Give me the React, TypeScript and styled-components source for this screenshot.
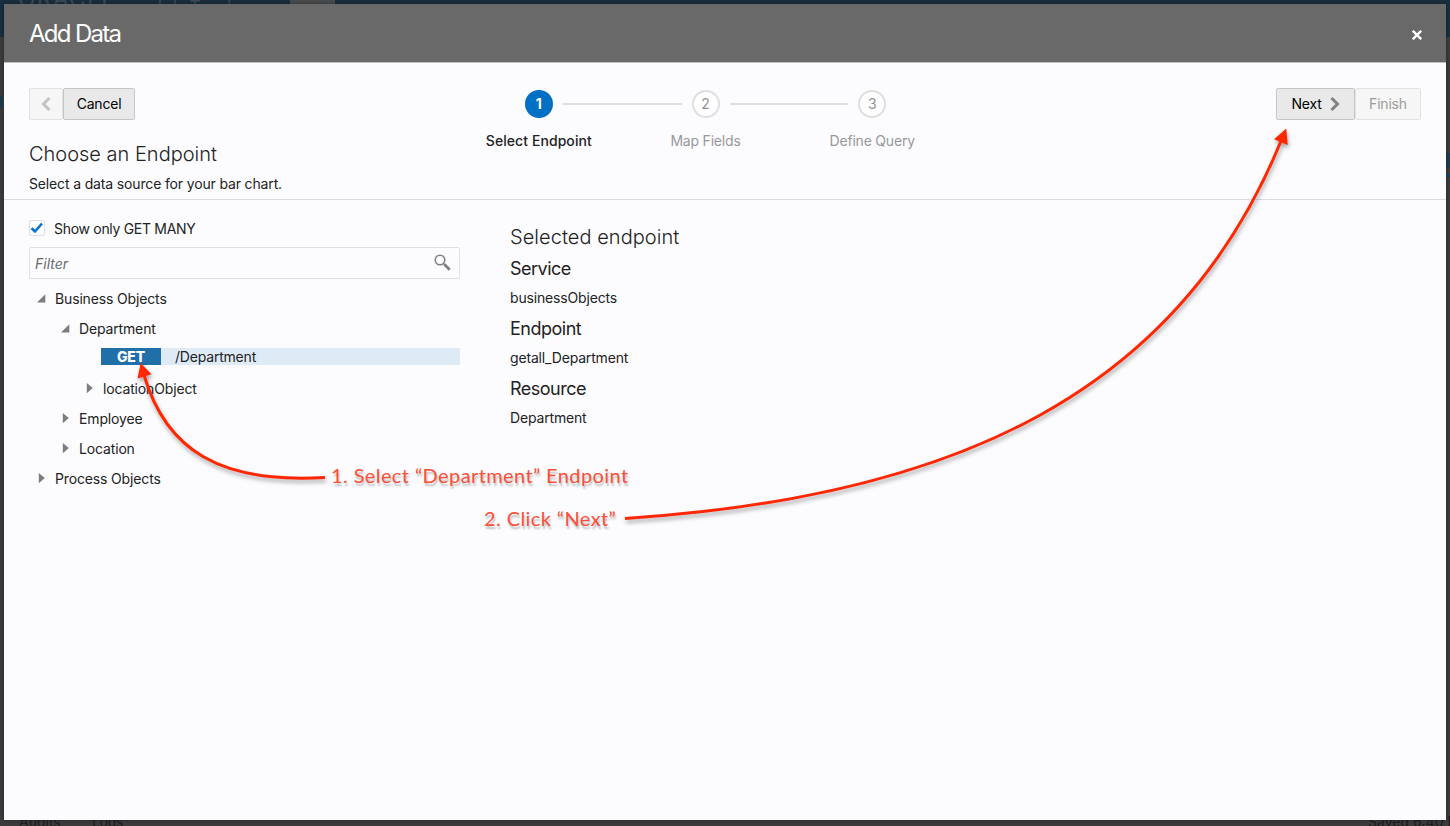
import React from "react";
import styled, { createGlobalStyle } from "styled-components";

const GlobalStyle = createGlobalStyle`
  * { box-sizing: border-box; }
  html, body { margin: 0; padding: 0; }
  body {
    font-family: Inter, "Liberation Sans", sans-serif;
    font-size: 14px;
    line-height: 20px;
    color: #222;
    overflow: hidden;
  }
  h1, h2, h3, p, ul { margin: 0; padding: 0; }
  button { font: inherit; }
`;

const Page = styled.div`
  position: relative;
  width: 1450px;
  height: 826px;
  padding: 4px;
  overflow: hidden;
  background: linear-gradient(#192e3e 0 37px, #3b3b3c 37px 100%);
`;

const Behind = styled.div<{ $x: number; $y: number; $size: number; $color: string; $spacing?: number }>`
  position: absolute;
  left: ${(p) => p.$x}px;
  top: ${(p) => p.$y}px;
  font-size: ${(p) => p.$size}px;
  line-height: 20px;
  letter-spacing: ${(p) => p.$spacing ?? 0}px;
  color: ${(p) => p.$color};
  white-space: nowrap;
`;

const BehindBlock = styled.div<{ $x: number; $y: number; $w: number; $h: number; $color: string }>`
  position: absolute;
  left: ${(p) => p.$x}px;
  top: ${(p) => p.$y}px;
  width: ${(p) => p.$w}px;
  height: ${(p) => p.$h}px;
  background: ${(p) => p.$color};
`;

const Dialog = styled.section`
  position: relative;
  display: flex;
  flex-direction: column;
  width: 1442px;
  height: 816px;
  background: #fcfcfe;
  box-shadow: 0 0 4px rgba(0, 0, 0, 0.35);
`;

const DialogHeader = styled.header`
  display: flex;
  align-items: center;
  justify-content: space-between;
  height: 59px;
  padding: 0 24px 0 25px;
  background: #696969;
  border-bottom: 1px solid #c0c0c0;
  color: #fff;
`;

const DialogTitle = styled.h1`
  margin-top: 2px;
  font-size: 24px;
  line-height: 30px;
  font-weight: 400;
  letter-spacing: -1.7px;
`;

const CloseButton = styled.button`
  display: flex;
  padding: 0;
  margin-top: 3px;
  border: 0;
  background: none;
  color: #fff;
`;

const WizardHead = styled.div`
  display: grid;
  grid-template-columns: 1fr 500px 1fr;
  height: 137px;
  padding: 25px 25px 0;
  border-bottom: 1px solid #dcdcde;
`;

const Intro = styled.div`
  display: flex;
  flex-direction: column;
`;

const ButtonGroup = styled.div<{ $end?: boolean }>`
  display: flex;
  height: 32px;
  justify-self: ${(p) => (p.$end ? "end" : "start")};
`;

const Button = styled.button<{ $width: number }>`
  display: flex;
  align-items: center;
  justify-content: center;
  gap: 8px;
  width: ${(p) => p.$width}px;
  height: 32px;
  padding: 0;
  border: 1px solid #c4c6ca;
  border-radius: 2px;
  background: #e9e9ea;
  color: #000;
  letter-spacing: -0.2px;

  &:disabled {
    border-color: #e2e3e5;
    background: #f6f6f7;
    color: #9d9d9f;
  }
`;

const StepTitle = styled.h2`
  margin-top: 20px;
  font-size: 20px;
  line-height: 28px;
  font-weight: 300;
  letter-spacing: 0;
`;

const Hint = styled.p`
  margin-top: 6px;
  letter-spacing: -0.15px;
`;

const Train = styled.ol`
  display: grid;
  grid-template-columns: repeat(3, 166.7px);
  justify-content: center;
  margin: 0 0 0 -39px;
  padding: 2px 0 0;
  list-style: none;
`;

const Step = styled.li<{ $active?: boolean }>`
  display: flex;
  flex-direction: column;
  align-items: center;
  color: ${(p) => (p.$active ? "#222" : "#98989a")};
  font-weight: ${(p) => (p.$active ? 500 : 400)};
  letter-spacing: ${(p) => (p.$active ? 0.07 : -0.2)}px;
`;

const StepMarker = styled.div`
  display: grid;
  grid-template-columns: 1fr 28px 1fr;
  align-items: center;
  gap: 10px;
  width: 100%;
  height: 28px;
  margin-bottom: 13px;
`;

const Connector = styled.span<{ $hidden?: boolean }>`
  height: 2px;
  background: ${(p) => (p.$hidden ? "transparent" : "#dfdfe1")};
`;

const StepNumber = styled.span<{ $active?: boolean }>`
  display: flex;
  align-items: center;
  justify-content: center;
  width: 28px;
  height: 28px;
  border-radius: 50%;
  border: 2px solid ${(p) => (p.$active ? "#0070c4" : "#dfdfe1")};
  background: ${(p) => (p.$active ? "#0070c4" : "#fff")};
  color: ${(p) => (p.$active ? "#fff" : "#929294")};
  font-weight: ${(p) => (p.$active ? 700 : 400)};
`;

const Content = styled.div`
  display: flex;
  flex: 1;
  padding: 0 25px;
`;

const EndpointPicker = styled.div`
  width: 431px;
  padding-top: 19px;
`;

const CheckRow = styled.label`
  display: flex;
  align-items: center;
  gap: 9px;
  height: 20px;
  letter-spacing: -0.3px;
`;

const CheckBox = styled.span`
  display: flex;
  align-items: center;
  justify-content: center;
  width: 16px;
  height: 16px;
  margin-top: -2px;
  border: 1px solid #dddee1;
  border-radius: 2px;
  background: #fff;
`;

const FilterBox = styled.div`
  display: flex;
  align-items: center;
  justify-content: space-between;
  height: 32px;
  margin-top: 8px;
  padding: 1px 8px 0 5px;
  border: 1px solid #dfe0e3;
  border-radius: 2px;
  color: #6a6a6c;
  font-style: italic;

  svg {
    margin-top: -2px;
  }
`;

const Tree = styled.ul`
  margin-top: 5px;
  list-style: none;
`;

const TreeRow = styled.li<{ $depth: number }>`
  display: flex;
  align-items: center;
  height: 30px;
  padding-left: ${(p) => 6 + p.$depth * 24}px;
  letter-spacing: -0.15px;
`;

const Disclosure = styled.span`
  display: flex;
  width: 20px;
`;

const EndpointRow = styled.li`
  display: flex;
  height: 17px;
  margin: 4px 0 9px 72px;
  background: #deebf6;
  line-height: 17px;
  letter-spacing: -0.2px;
`;

const Method = styled.span`
  width: 60px;
  margin-right: 14px;
  background: #216fa9;
  color: #fff;
  font-weight: 800;
  text-align: center;
`;

const Details = styled.div`
  padding: 23px 0 0 50px;
`;

const DetailsTitle = styled.h2`
  margin-bottom: 3px;
  font-size: 20px;
  line-height: 28px;
  font-weight: 300;
  letter-spacing: 0.05px;
`;

const DetailLabel = styled.h3`
  font-size: 18px;
  line-height: 30px;
  font-weight: 400;
  letter-spacing: -0.5px;
`;

const DetailValue = styled.p`
  margin: -1px 0 1px;
  line-height: 30px;
  letter-spacing: -0.17px;
`;

const Arrows = styled.svg`
  position: absolute;
  left: 0;
  top: 0;
  filter: drop-shadow(1px 3px 2px rgba(0, 0, 0, 0.35));
  pointer-events: none;
`;

const Note = styled.div<{ $x: number; $y: number }>`
  position: absolute;
  left: ${(p) => p.$x}px;
  top: ${(p) => p.$y}px;
  font-family: Lato, sans-serif;
  font-size: 20px;
  line-height: 24px;
  letter-spacing: 0.4px;
  color: #fb4f38;
  text-shadow: 1px 3px 2px rgba(0, 0, 0, 0.25);
  white-space: nowrap;
`;

const Chevron = ({ left, color }: { left?: boolean; color: string }) => (
  <svg width="10" height="14" viewBox="0 0 10 14" fill="none" stroke={color} strokeWidth="3">
    <path d={left ? "M8.5 1 2.5 7l6 6" : "M1.5 1l6 6-6 6"} />
  </svg>
);

const Toggle = ({ open }: { open?: boolean }) => (
  <Disclosure>
    <svg width="12" height="12" viewBox="0 0 12 12" fill="#7c7d80">
      <path d={open ? "M10.3 1.2V9.5H2z" : "M3.8 0 9.8 5 3.8 10.3z"} />
    </svg>
  </Disclosure>
);

const steps = ["Select Endpoint", "Map Fields", "Define Query"];

const details = [
  ["Service", "businessObjects"],
  ["Endpoint", "getall_Department"],
  ["Resource", "Department"],
];

export default function App() {
  return (
    <Page>
      <GlobalStyle />
      <BehindBlock $x={290} $y={0} $w={45} $h={4} $color="#494b4d" />
      <BehindBlock $x={0} $y={96} $w={2} $h={12} $color="#193a52" />
      <BehindBlock $x={1446} $y={153} $w={4} $h={15} $color="#203b50" />
      <BehindBlock $x={1446} $y={174} $w={4} $h={3} $color="#17415d" />
      <Behind $x={18} $y={-11} $size={23} $spacing={1.2} $color="#3d4a55">ORACLE</Behind>
      <Behind $x={152} $y={-2} $size={18} $color="#3d4a55">Job Tracker</Behind>
      <Behind $x={19} $y={812} $size={14} $color="#1c1c1e">Audits</Behind>
      <Behind $x={92} $y={812} $size={14} $spacing={-0.3} $color="#1c1c1e">Logs</Behind>
      <Behind $x={1368} $y={812} $size={14} $color="#1c1c1e">Saved 6:40 PM</Behind>

      <Dialog>
        <DialogHeader>
          <DialogTitle>Add Data</DialogTitle>
          <CloseButton aria-label="Close">
            <svg width="10" height="10" viewBox="0 0 10 10" stroke="currentColor" strokeWidth="2.4">
              <path d="M.8.8l8.4 8.4M9.2.8.8 9.2" />
            </svg>
          </CloseButton>
        </DialogHeader>

        <WizardHead>
          <Intro>
            <ButtonGroup>
              <Button $width={34} disabled aria-label="Back">
                <Chevron left color="#c2c3c6" />
              </Button>
              <Button $width={72}>Cancel</Button>
            </ButtonGroup>
            <StepTitle>Choose an Endpoint</StepTitle>
            <Hint>Select a data source for your bar chart.</Hint>
          </Intro>
          <Train>
            {steps.map((label, i) => (
              <Step key={label} $active={i === 0}>
                <StepMarker>
                  <Connector $hidden={i === 0} />
                  <StepNumber $active={i === 0}>{i + 1}</StepNumber>
                  <Connector $hidden={i === steps.length - 1} />
                </StepMarker>
                {label}
              </Step>
            ))}
          </Train>
          <ButtonGroup $end>
            <Button $width={79}>
              Next
              <Chevron color="#808285" />
            </Button>
            <Button $width={66} disabled>Finish</Button>
          </ButtonGroup>
        </WizardHead>

        <Content>
          <EndpointPicker>
            <CheckRow>
              <CheckBox>
                <svg width="14" height="12" viewBox="0 0 14 12" fill="none" stroke="#0572ce" strokeWidth="2.6">
                  <path d="M1.5 6.2 5 9.5 12 1.5" />
                </svg>
              </CheckBox>
              Show only GET MANY
            </CheckRow>
            <FilterBox>
              Filter
              <svg width="17" height="17" viewBox="0 0 17 17" fill="none" stroke="#7d7f82">
                <circle cx="6" cy="6" r="4.8" strokeWidth="1.5" />
                <path d="M9.3 9.3l2 2" strokeWidth="1.5" />
                <path d="M10.5 10.5l5.2 5.2" strokeWidth="2.8" />
              </svg>
            </FilterBox>
            <Tree>
              <TreeRow $depth={0}><Toggle open />Business Objects</TreeRow>
              <TreeRow $depth={1}><Toggle open />Department</TreeRow>
              <EndpointRow><Method>GET</Method>/Department</EndpointRow>
              <TreeRow $depth={2}><Toggle />locationObject</TreeRow>
              <TreeRow $depth={1}><Toggle />Employee</TreeRow>
              <TreeRow $depth={1}><Toggle />Location</TreeRow>
              <TreeRow $depth={0}><Toggle />Process Objects</TreeRow>
            </Tree>
          </EndpointPicker>
          <Details>
            <DetailsTitle>Selected endpoint</DetailsTitle>
            {details.map(([label, value]) => (
              <React.Fragment key={label}>
                <DetailLabel>{label}</DetailLabel>
                <DetailValue>{value}</DetailValue>
              </React.Fragment>
            ))}
          </Details>
        </Content>
      </Dialog>

      <Arrows width="1450" height="826" viewBox="0 0 1450 826" fill="none">
        <g stroke="#ff2600" strokeWidth="3">
          <path d="M325 477.5C220 484 166 450 144 375" />
          <path d="M625 518.5C960 497 1180 389 1281 141" />
        </g>
        <path d="M140.7 363 137.5 378.5 151.5 374.3z" fill="#ff2600" />
        <path d="M1286.3 128.5 1274 139.3 1287.7 145z" fill="#ff2600" />
      </Arrows>
      <Note $x={331} $y={463}>1. Select “Department” Endpoint</Note>
      <Note $x={484} $y={506}>2. Click “Next”</Note>
    </Page>
  );
}
